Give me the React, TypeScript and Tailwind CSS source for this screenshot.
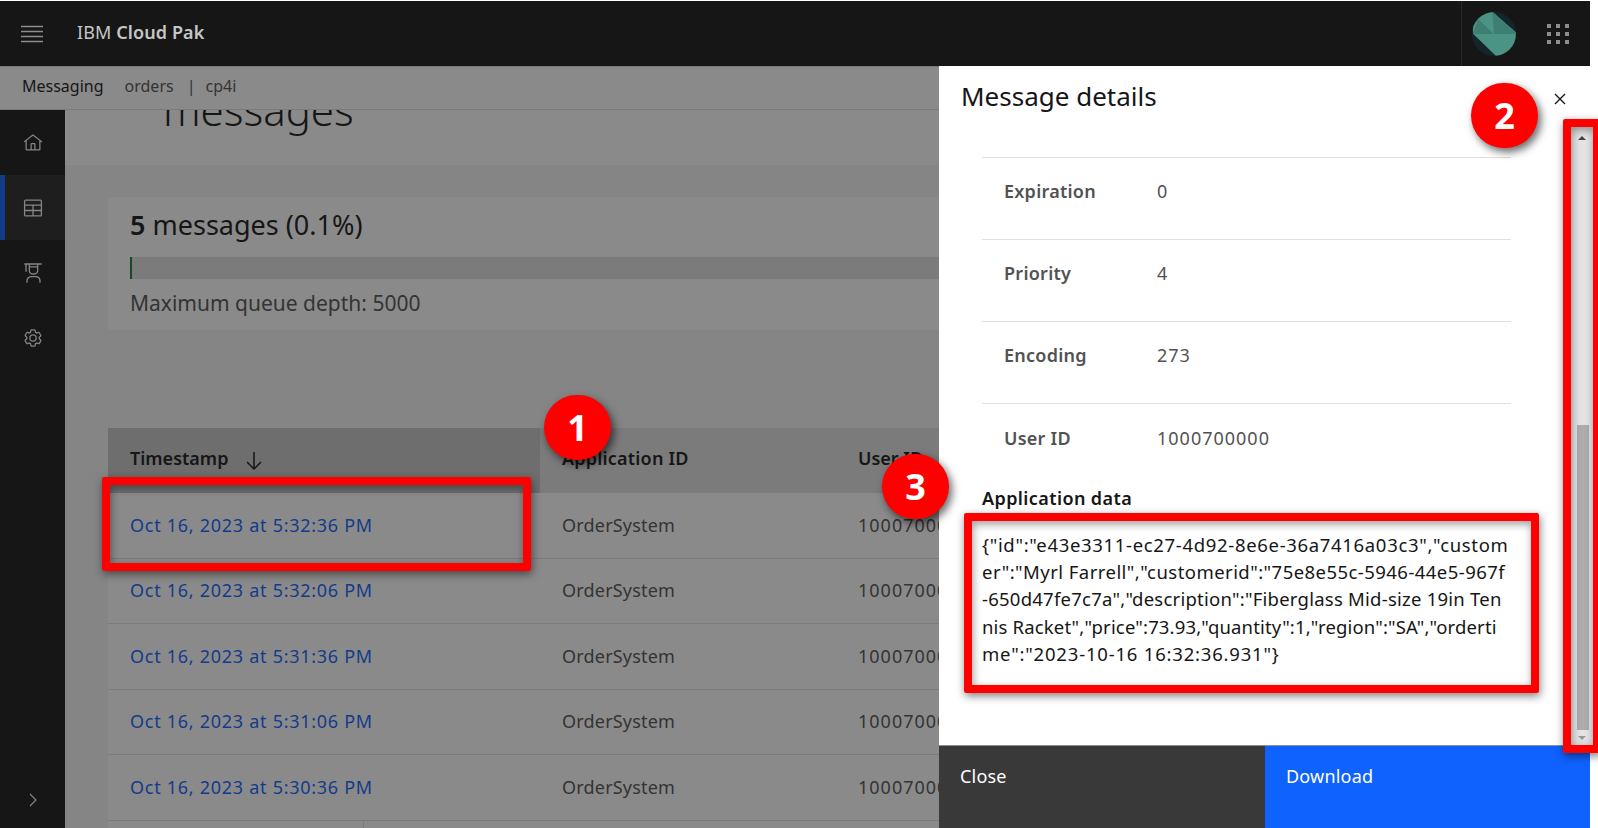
const font = '"Noto Sans", sans-serif';

const rows = ["Oct 16, 2023 at 5:32:36 PM", "Oct 16, 2023 at 5:32:06 PM", "Oct 16, 2023 at 5:31:36 PM", "Oct 16, 2023 at 5:31:06 PM", "Oct 16, 2023 at 5:30:36 PM"];
const details = [["Expiration", "0"], ["Priority", "4"], ["Encoding", "273"], ["User ID", "1000700000"]];
const appLines = [
  ['{"id":"e43e3311-ec27-4d92-8e6e-36a7416a03c3","custom', "tracking-[0.67px]"],
  ['er":"Myrl Farrell","customerid":"75e8e55c-5946-44e5-967f', "tracking-[0.45px]"],
  ['-650d47fe7c7a","description":"Fiberglass Mid-size 19in Ten', "tracking-[0.24px]"],
  ['nis Racket","price":73.93,"quantity":1,"region":"SA","orderti', "tracking-[0.16px]"],
  ['me":"2023-10-16 16:32:36.931"}', "tracking-[0.8px]"],
];

function Home() {
  return <svg width="20" height="20" viewBox="0 0 32 32" fill="currentColor"><path d="M16.6123,2.2138a1.01,1.01,0,0,0-1.2427,0L1,13.4194l1.2427,1.5717L4,13.6209V26a2.0041,2.0041,0,0,0,2,2H26a2.0037,2.0037,0,0,0,2-2V13.63L29.7573,15,31,13.4282ZM18,26H14V18h4Zm2,0V18a2.0023,2.0023,0,0,0-2-2H14a2.002,2.002,0,0,0-2,2v8H6V12.0615l10-7.79,10,7.8005V26Z" /></svg>;
}
function TableIcon() {
  return <svg width="20" height="20" viewBox="0 0 20 20" fill="none" stroke="currentColor" strokeWidth="1.3"><rect x="1.6" y="2.1" width="16.8" height="15.8" rx="1" /><path d="M1.6 7.2H18.4M1.6 12.5H18.4M10 7.2V17.9" /></svg>;
}
function Edu() {
  return <svg width="20" height="20" viewBox="0 0 20 20" fill="none" stroke="currentColor" strokeWidth="1.3"><path d="M1.3 1H18.7M3 1V8.7M6.3 1V7.5C6.3 9.8 8 11 10.5 11C13 11 14.7 9.8 14.7 7.5V1M6.3 3.9H14.7M4 19.7V18C4 15 6 13.7 8.5 13.7H12.5C15 13.7 17 15 17 18V19.7" /></svg>;
}
function Gear() {
  return <svg width="20" height="20" viewBox="0 0 32 32" fill="currentColor"><path d="M27,16.76c0-.25,0-.5,0-.76s0-.51,0-.77l1.92-1.68A2,2,0,0,0,29.3,11L26.94,7a2,2,0,0,0-1.73-1,2,2,0,0,0-.64.1l-2.43.82a11.35,11.35,0,0,0-1.31-.75l-.51-2.52a2,2,0,0,0-2-1.61H13.64a2,2,0,0,0-2,1.61l-.51,2.52a11.48,11.48,0,0,0-1.32.75L7.43,6.06A2,2,0,0,0,6.79,6,2,2,0,0,0,5.06,7L2.7,11a2,2,0,0,0,.41,2.51L5,15.24c0,.25,0,.5,0,.76s0,.51,0,.77L3.11,18.45A2,2,0,0,0,2.7,21L5.06,25a2,2,0,0,0,1.73,1,2,2,0,0,0,.64-.1l2.43-.82a11.35,11.35,0,0,0,1.31.75l.51,2.52a2,2,0,0,0,2,1.61h4.72a2,2,0,0,0,2-1.61l.51-2.52a11.48,11.48,0,0,0,1.32-.75l2.42.82a2,2,0,0,0,.64.1,2,2,0,0,0,1.73-1L29.3,21a2,2,0,0,0-.41-2.51ZM25.21,24l-3.43-1.16a8.86,8.86,0,0,1-2.71,1.57L18.36,28H13.64l-.71-3.55a9.36,9.36,0,0,1-2.7-1.57L6.79,24,4.43,20l2.72-2.4a8.9,8.9,0,0,1,0-3.13L4.43,12,6.79,8l3.43,1.16a8.86,8.86,0,0,1,2.71-1.57L13.64,4h4.72l.71,3.55a9.36,9.36,0,0,1,2.7,1.57L25.21,8,27.57,12l-2.72,2.4a8.9,8.9,0,0,1,0,3.13L27.57,20Z" /><path d="M16,22a6,6,0,1,1,6-6A5.94,5.94,0,0,1,16,22Zm0-10a3.91,3.91,0,0,0-4,4,3.91,3.91,0,0,0,4,4,3.91,3.91,0,0,0,4-4A3.91,3.91,0,0,0,16,12Z" /></svg>;
}

function Badge({ n, cls }: { n: string; cls: string }) {
  return <div className={"absolute z-30 w-[67px] h-[65px] rounded-full bg-[#ff0000] text-white flex items-center justify-center text-[36px] font-bold shadow-[3px_4px_8px_rgba(0,0,0,0.6)] " + cls}>{n}</div>;
}

const boxShadow = "shadow-[1px_3px_8px_rgba(0,0,0,0.5),inset_1px_3px_8px_rgba(0,0,0,0.4)]";

export default function App() {
  return (
    <div className="relative w-[1598px] h-[828px] overflow-hidden bg-white" style={{ fontFamily: font }}>
      <div className="w-[1590px] h-[828px] pt-px flex flex-col">
        <header className="h-[65px] shrink-0 bg-[#161616] flex items-center text-[#c6c6c6]">
          <div className="w-[21px]" />
          <svg width="22" height="18" viewBox="0 0 22 18" stroke="#8d8d8d" strokeWidth="1.3"><path d="M0 1.5H22M0 6.5H22M0 11.5H22M0 16.5H22" /></svg>
          <div className="ml-[34px] -mt-[2px] text-[18px] tracking-[0.1px]">IBM <span className="font-semibold">Cloud Pak</span></div>
          <div className="ml-auto w-[65px] h-full border-l border-[#2a2a2a] flex items-center justify-center">
            <svg width="46" height="46" viewBox="0 0 46 46">
              <defs><clipPath id="logoClip"><circle cx="23" cy="23" r="22" /></clipPath></defs>
              <circle cx="23" cy="23" r="22" fill="#14252b" />
              <g clipPath="url(#logoClip)">
                <path d="M21.3 0.7L44.7 21.3L46 46L24.7 44.7L2.3 23L0 0Z" fill="#4b9484" />
                <path d="M7 8L23 23L2 23Z" fill="#3f7f73" />
                <path d="M23 23L46 23L44.7 21.3L21.3 0.7Z" fill="#3f7f73" />
              </g>
            </svg>
          </div>
          <div className="w-[64px] flex justify-center">
            <div className="grid grid-cols-3 gap-x-[5px] gap-y-[4px]">
              {Array.from({ length: 9 }).map((_, i) => <div key={i} className="w-[4px] h-[4px] bg-[#8d8d8d]" />)}
            </div>
          </div>
        </header>
        <div className="flex-1 relative min-h-0 flex flex-col">
          <div className="h-[44px] shrink-0 bg-white border-b border-[#e0e0e0] border-t flex items-center pl-[22px] pb-[5px] text-[16px] text-[#525252]">
            <span className="text-[#161616]">Messaging</span>
            <span className="ml-[21px]">orders</span>
            <span className="ml-[13px]">|</span>
            <span className="ml-[10px]">cp4i</span>
          </div>
          <div className="flex-1 min-h-0 flex">
            <nav className="w-[65px] shrink-0 bg-[#161616] flex flex-col text-[#f4f4f4] relative">
              <div className="h-[65px] flex items-center justify-center"><Home /></div>
              <div className="h-[65px] flex items-center justify-center bg-[#262626] border-l-[5px] border-[#0f62fe] pr-[5px]"><TableIcon /></div>
              <div className="h-[65px] flex items-center justify-center"><Edu /></div>
              <div className="h-[65px] flex items-center justify-center"><Gear /></div>
              <div className="mt-auto h-[38px] flex items-start justify-center">
                <svg width="20" height="20" viewBox="0 0 20 20" fill="none" stroke="currentColor" strokeWidth="1.2"><path d="M7 4L13 10L7 16" /></svg>
              </div>
            </nav>
            <main className="flex-1 min-w-0 bg-[#f4f4f4]">
              <div className="h-[55px] bg-white overflow-hidden pl-[98px]">
                <div className="-mt-[32px] text-[42px] leading-[64px] font-light text-[#161616]">messages</div>
              </div>
              <section className="mt-[32px] ml-[43px] h-[133px] bg-white pl-[22px] pt-[12px]">
                <div className="text-[27px] leading-[32px] text-[#161616]"><b className="font-semibold">5</b> messages (0.1%)</div>
                <div className="mt-[16px] h-[22px] bg-[#e0e0e0]"><div className="w-[2px] h-full bg-[#198038]" /></div>
                <div className="mt-[10px] text-[21px] leading-[28px] text-[#525252]">Maximum queue depth: 5000</div>
              </section>
              <section className="mt-[98px] ml-[43px]">
                <div className="h-[65px] flex items-center bg-[#e0e0e0] text-[18px] font-semibold text-[#161616]">
                  <div className="w-[432px] h-full bg-[#c6c6c6] flex items-center pl-[22px] gap-[14px] pb-[4px]">Timestamp
                    <svg className="mt-[4px]" width="24" height="24" viewBox="0 0 32 32" fill="currentColor"><path d="M24.59 16.59L17 24.17V4h-2v20.17l-7.59-7.58L6 18l10 10 10-10-1.41-1.41z" /></svg>
                  </div>
                  <div className="w-[296px] pl-[22px] pb-[4px] tracking-[0.2px]">Application ID</div>
                  <div className="pl-[22px] pb-[4px]">User ID</div>
                </div>
                {rows.map((r) => (
                  <div key={r} className="h-[65.5px] flex items-center bg-white border-b border-[#e0e0e0] text-[18px] text-[#525252]">
                    <div className="w-[432px] pl-[22px] text-[#0f62fe] tracking-[0.72px]">{r}</div>
                    <div className="w-[296px] pl-[22px] tracking-[0.2px]">OrderSystem</div>
                    <div className="pl-[22px] tracking-[1px]">1000700000</div>
                  </div>
                ))}
                <div className="h-[10px] bg-white"><div className="w-[256px] h-full border-r border-[#e0e0e0]" /></div>
              </section>
            </main>
          </div>
          {/* dim overlay */}
          <div className="absolute inset-0 bg-[#161616]/50 z-10" />
          {/* side panel */}
          <aside className="absolute z-20 left-[939px] right-0 top-0 bottom-0 bg-white flex flex-col">
            <div className="h-[91px] shrink-0 relative">
              <div className="pl-[22px] pt-[8px] text-[26px] leading-[44px] text-[#161616]">Message details</div>
              <svg className="absolute left-[610px] top-[22px]" width="22" height="22" viewBox="0 0 32 32" fill="#161616"><path d="M24 9.4L22.6 8 16 14.6 9.4 8 8 9.4 14.6 16 8 22.6 9.4 24 16 17.4 22.6 24 24 22.6 17.4 16 24 9.4z" /></svg>
            </div>
            <div className="flex-1 min-h-0 pl-[43px] pr-[79px] relative">
              <div className="border-t border-[#e0e0e0]">
                {details.map(([k, v]) => (
                  <div key={k} className="h-[82px] flex items-center border-b border-[#e0e0e0] last:border-b-0 pl-[22px] pb-[14px] text-[18px] text-[#525252]">
                    <div className="w-[153px] font-semibold tracking-[0.25px]">{k}</div><div className="tracking-[1px]">{v}</div>
                  </div>
                ))}
              </div>
              <div className="text-[18px] font-semibold text-[#161616] leading-[24px] tracking-[0.4px]">Application data</div>
              <div className="mt-[21px] text-[18.5px] leading-[27.2px] text-[#161616] whitespace-nowrap">
                {appLines.map(([l, t]) => <div key={l} className={t}>{l}</div>)}
              </div>
            </div>
            <div className="h-[83px] shrink-0 flex w-[651px] border-t border-[#8d8d8d] text-[18px] text-white tracking-[0.2px]">
              <div className="w-[326px] bg-[#393939] pl-[21px] pt-[17px]">Close</div>
              <div className="flex-1 bg-[#0f62fe] pl-[21px] pt-[17px]">Download</div>
            </div>
          </aside>
        </div>
      </div>

      {/* fake scrollbar */}
      <div className="absolute z-20 left-[1571px] top-[127px] w-[22px] h-[618px] bg-[#e4e4e4] flex flex-col items-center">
        <div className="mt-[9px] w-0 h-0 border-l-[4px] border-r-[4px] border-b-[4px] border-l-transparent border-r-transparent border-b-[#444]" />
        <div className="mt-[285px] w-[12px] h-[305px] bg-[#adadad] self-start ml-[6px]" />
        <div className="mt-[6px] w-0 h-0 border-l-[4px] border-r-[4px] border-t-[4px] border-l-transparent border-r-transparent border-t-[#999]" />
      </div>

      {/* annotations */}
      <div className={"absolute z-30 left-[102px] top-[477px] w-[429px] h-[94px] border-[8px] border-[#ff0000] rounded-[2px] " + boxShadow} />
      <div className={"absolute z-30 left-[1563px] top-[119px] w-[38px] h-[634px] border-[8px] border-[#ff0000] rounded-[2px] " + boxShadow} />
      <div className={"absolute z-30 left-[964px] top-[513px] w-[575px] h-[180px] border-[8px] border-[#ff0000] rounded-[2px] " + boxShadow} />
      <Badge n="1" cls="left-[544px] top-[395px]" />
      <Badge n="2" cls="left-[1471px] top-[83px]" />
      <Badge n="3" cls="left-[882px] top-[454px]" />
    </div>
  );
}
